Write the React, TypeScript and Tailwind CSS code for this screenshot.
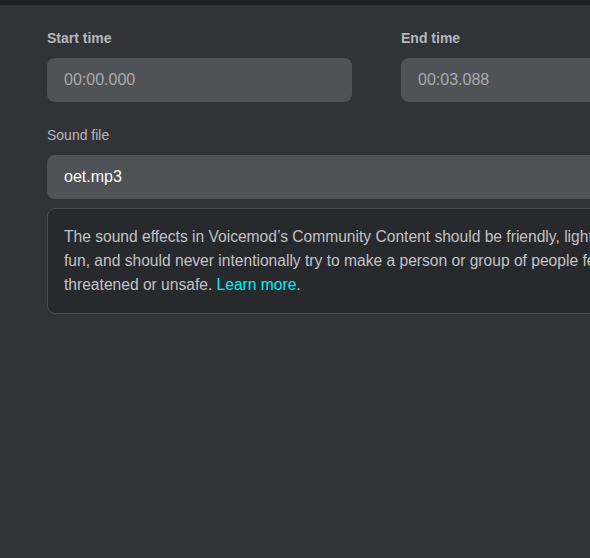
import React from "react";

export default function App() {
  return (
    <div
      className="w-[590px] h-[558px] overflow-hidden bg-[#323338] flex flex-col"
      style={{ fontFamily: '"Liberation Sans", Arial, sans-serif' }}
    >
      <div className="h-[5px] bg-[#1e1f23] shrink-0" />
      <div className="pl-[47px] pt-[25px] w-[900px]">
        <div className="flex gap-[49px]">
          <div className="w-[305px] flex flex-col">
            <div className="text-[14px] font-bold text-[#b6b7bb] leading-[16px]">Start time</div>
            <div className="mt-[12px] h-[44px] rounded-[8px] bg-[#515257] flex items-center pl-[17px] text-[16px] text-[#a9aaae]">
              00:00.000
            </div>
          </div>
          <div className="w-[305px] flex flex-col">
            <div className="text-[14px] font-bold text-[#b6b7bb] leading-[16px]">End time</div>
            <div className="mt-[12px] h-[44px] rounded-[8px] bg-[#515257] flex items-center pl-[17px] text-[16px] text-[#a9aaae]">
              00:03.088
            </div>
          </div>
        </div>
        <div className="mt-[25px] text-[14px] text-[#b6b7bb] leading-[16px]">Sound file</div>
        <div className="mt-[12px] h-[44px] w-[659px] rounded-[8px] bg-[#515257] flex items-center pl-[17px] text-[16px] text-white">
          oet.mp3
        </div>
        <div className="mt-[9px] w-[659px] rounded-[8px] border border-[#4b4c50] bg-[#28292d] px-[16px] pt-[16px] pb-[16px] text-[15.6px] leading-[24px] text-[#c2c3c7] whitespace-nowrap">
          The sound effects in Voicemod’s Community Content should be friendly, lighthearted and
          <br />
          fun, and should never intentionally try to make a person or group of people feel
          <br />
          threatened or unsafe. <span className="text-[#00f0f0]">Learn more</span>.
        </div>
      </div>
    </div>
  );
}
